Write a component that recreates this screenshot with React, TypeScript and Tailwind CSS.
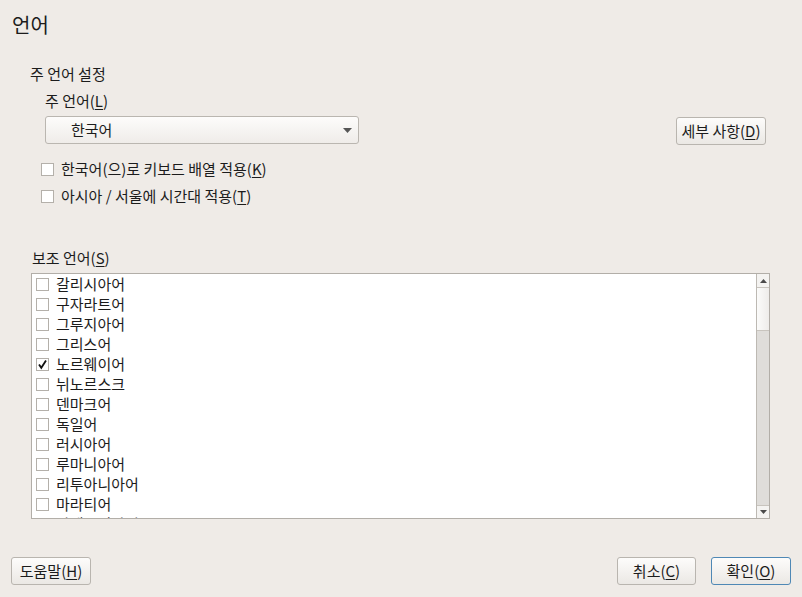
import React from "react";

const font = { fontFamily: '"Noto Sans CJK KR", "Noto Sans", sans-serif' };

function U({ children }: { children: React.ReactNode }) {
  return <span className="underline underline-offset-2">{children}</span>;
}

function Box({ checked = false }: { checked?: boolean }) {
  return (
    <span className="flex h-[13px] w-[13px] shrink-0 items-center justify-center border border-[#b4b0aa] bg-white">
      {checked && (
        <svg width="11" height="11" viewBox="0 0 11 11">
          <path d="M2 5.5 L4.3 8.8 L9 1.5" fill="none" stroke="#111" strokeWidth="1.8" />
        </svg>
      )}
    </span>
  );
}

const langs = [
  "갈리시아어",
  "구자라트어",
  "그루지아어",
  "그리스어",
  "노르웨이어",
  "뉘노르스크",
  "덴마크어",
  "독일어",
  "러시아어",
  "루마니아어",
  "리투아니아어",
  "마라티어",
  "마케도니아어",
];

function Button({ children, primary = false, className = "" }: { children: React.ReactNode; primary?: boolean; className?: string }) {
  return (
    <div
      className={`flex h-[28px] items-center justify-center rounded-[3px] border bg-gradient-to-b from-[#fdfcfb] to-[#ebe8e4] text-[15px] text-[#1c1c1c] ${
        primary ? "border-[#4f88b5]" : "border-[#b9b5af]"
      } ${className}`}
    >
      {children}
    </div>
  );
}

export default function App() {
  return (
    <div className="flex h-[597px] w-[802px] flex-col bg-[#efebe7] text-[#1c1c1c]" style={font}>
      <div className="pl-[12px] pt-[10px] text-[20px] leading-[30px]">언어</div>

      <div className="mt-[24px] pl-[30px] text-[15px] leading-[20px]">주 언어 설정</div>
      <div className="mt-[7px] pl-[45px] text-[15px] leading-[20px]">
        주 언어(<U>L</U>)
      </div>

      <div className="mt-[5px] flex items-start pl-[45px] pr-[36px]">
        <div className="flex h-[28px] w-[314px] items-center justify-between rounded-[3px] border border-[#bab6b0] bg-gradient-to-b from-[#fdfcfb] to-[#efece9] pl-[25px] pr-[6px] text-[15px]">
          <span>한국어</span>
          <svg width="9" height="5" viewBox="0 0 9 5">
            <path d="M0 0 H9 L4.5 5 Z" fill="#555" />
          </svg>
        </div>
        <div className="flex-1" />
        <Button className="mt-[1px] w-[90px]">
          세부 사항(<U>D</U>)
        </Button>
      </div>

      <div className="mt-[14px] flex flex-col gap-[7px] pl-[41px] text-[15px] leading-[20px]">
        <div className="flex items-center gap-[7px]">
          <Box />
          <span>
            한국어(으)로 키보드 배열 적용(<U>K</U>)
          </span>
        </div>
        <div className="flex items-center gap-[7px]">
          <Box />
          <span>
            아시아 / 서울에 시간대 적용(<U>T</U>)
          </span>
        </div>
      </div>

      <div className="mt-[42px] pl-[32px] text-[15px] leading-[20px]">
        보조 언어(<U>S</U>)
      </div>

      <div className="ml-[31px] mt-[5px] flex h-[246px] w-[739px] border border-[#b2aea8] bg-white">
        <div className="flex-1 overflow-hidden">
          {langs.map((l, i) => (
            <div key={l} className="flex h-[20px] items-center gap-[7px] pl-[4px] text-[15px]">
              <Box checked={i === 4} />
              <span>{l}</span>
            </div>
          ))}
        </div>
        <div className="flex w-[13px] flex-col border-l border-[#bdb9b3] bg-[#dfddda]">
          <div className="flex h-[14px] items-center justify-center border-b border-[#c8c4be] bg-[#f4f3f1]">
            <svg width="7" height="4" viewBox="0 0 7 4">
              <path d="M0 4 H7 L3.5 0 Z" fill="#4a4a4a" />
            </svg>
          </div>
          <div className="h-[43px] border-b border-[#c8c4be] bg-gradient-to-r from-[#fbfbfa] to-[#eeecea]" />
          <div className="flex-1" />
          <div className="flex h-[13px] items-center justify-center border-t border-[#c8c4be] bg-[#f4f3f1]">
            <svg width="7" height="4" viewBox="0 0 7 4">
              <path d="M0 0 H7 L3.5 4 Z" fill="#4a4a4a" />
            </svg>
          </div>
        </div>
      </div>

      <div className="mt-[38px] flex items-center px-[11px]">
        <Button className="w-[80px]">
          도움말(<U>H</U>)
        </Button>
        <div className="flex-1" />
        <Button className="w-[79px]">
          취소(<U>C</U>)
        </Button>
        <Button primary className="ml-[15px] w-[80px]">
          확인(<U>O</U>)
        </Button>
      </div>
    </div>
  );
}
